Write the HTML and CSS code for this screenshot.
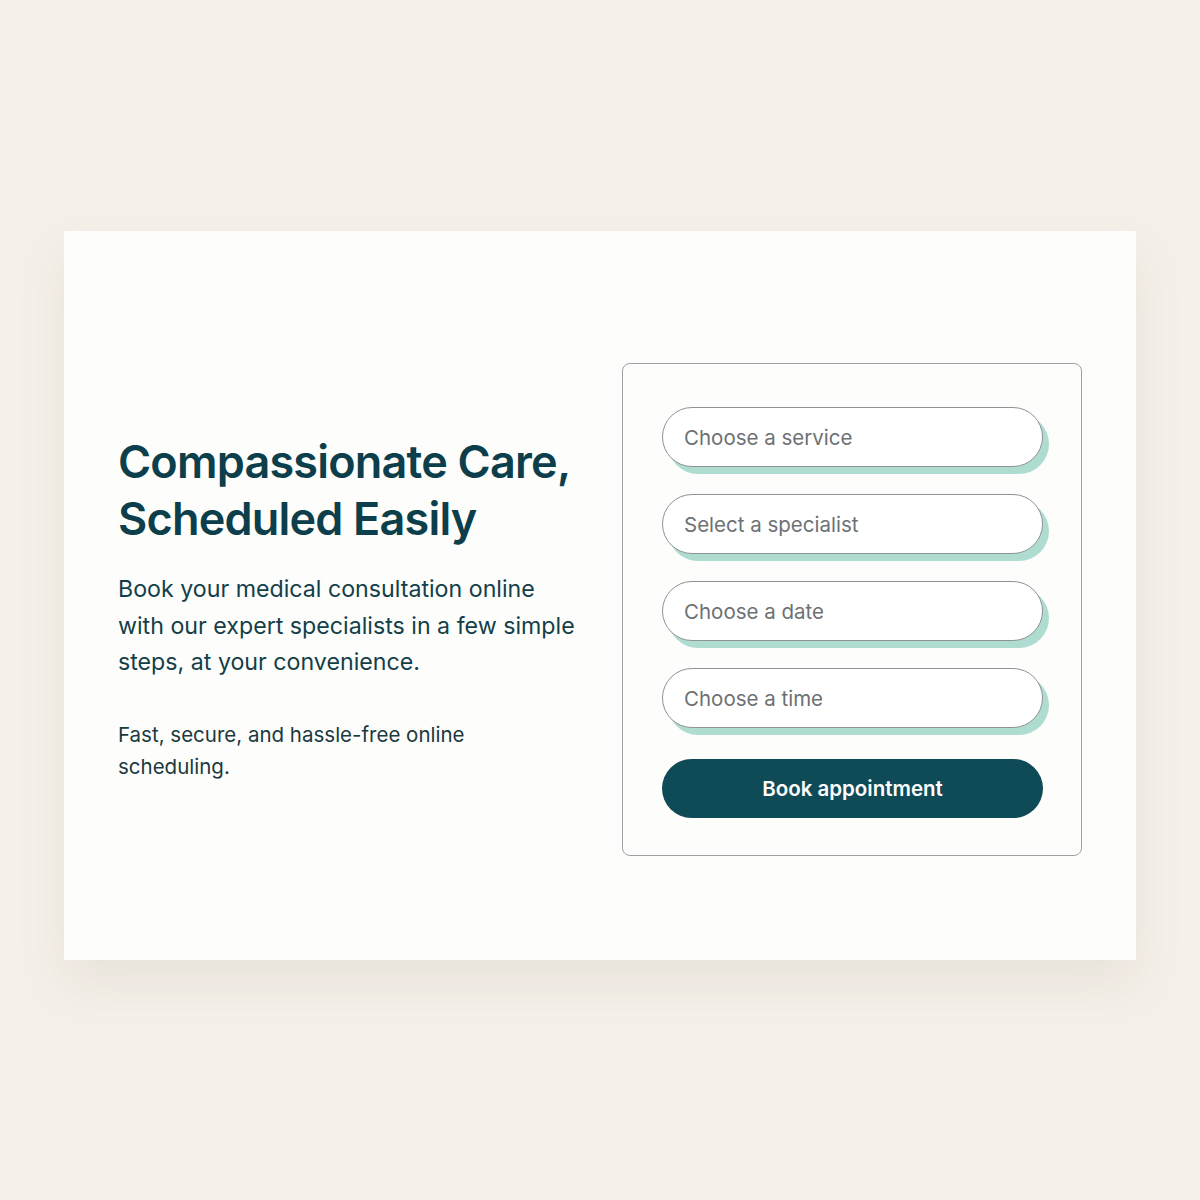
FILE: index.html
```html
<!DOCTYPE html>
<html lang="en">
<head>
<meta charset="utf-8">
<title>Book a consultation</title>
<link rel="stylesheet" href="styles.css">
</head>
<body>
<main class="card">
  <section class="intro">
    <h1 class="title">Compassionate Care,<br>Scheduled Easily</h1>
    <p class="lead">Book your medical consultation online with our expert specialists in a few simple steps, at your convenience.</p>
    <p class="note">Fast, secure, and hassle-free online scheduling.</p>
  </section>
  <form class="booking">
    <div class="field">Choose a service</div>
    <div class="field">Select a specialist</div>
    <div class="field">Choose a date</div>
    <div class="field">Choose a time</div>
    <button type="button" class="submit">Book appointment</button>
  </form>
</main>
</body>
</html>
```
FILE: styles.css
```css
html, body {
  margin: 0;
  padding: 0;
}
body {
  background: #f5f0e9;
  font-family: Inter, "Noto Sans", sans-serif;
  width: 1200px;
  height: 1200px;
  display: flex;
  justify-content: center;
  padding-top: 231px;
  box-sizing: border-box;
}
.card {
  width: 1072px;
  height: 729px;
  box-sizing: border-box;
  background: #fdfdfb;
  box-shadow: 0 24px 48px rgba(120, 105, 85, 0.10);
  display: flex;
  justify-content: space-between;
  align-items: flex-start;
  padding: 132px 54px 0 54px;
}
.intro {
  width: 480px;
  padding-top: 70px;
  color: #0e3f4b;
}
.title {
  margin: 0;
  font-size: 45px;
  line-height: 57px;
  font-weight: 600;
  letter-spacing: -0.8px;
  color: #0c3f4b;
  white-space: nowrap;
}
.lead {
  margin: 24px 0 0 0;
  font-size: 23.2px;
  line-height: 36.5px;
  color: #133f4a;
  max-width: 466px;
}
.note {
  margin: 38px 0 0 0;
  font-size: 20.5px;
  line-height: 32px;
  color: #1b3940;
  max-width: 380px;
}
.booking {
  width: 460px;
  height: 493px;
  box-sizing: border-box;
  border: 1px solid #9ea2a5;
  border-radius: 8px;
  padding: 43px 39px 0 39px;
  display: flex;
  flex-direction: column;
  gap: 27px;
}
.field {
  height: 60px;
  box-sizing: border-box;
  border: 1px solid #8e9396;
  border-radius: 30px;
  background: #ffffff;
  box-shadow: 6px 7px 0 #afdcd0;
  display: flex;
  align-items: center;
  padding-left: 21px;
  font-size: 20.5px;
  color: #6d7173;
  width: 381px;
}
.submit {
  margin-top: 4px;
  height: 59px;
  width: 381px;
  border: none;
  border-radius: 30px;
  background: #0f4a57;
  color: #ffffff;
  font-family: Inter, "Noto Sans", sans-serif;
  font-size: 20.5px;
  font-weight: 600;
  cursor: pointer;
}
```
